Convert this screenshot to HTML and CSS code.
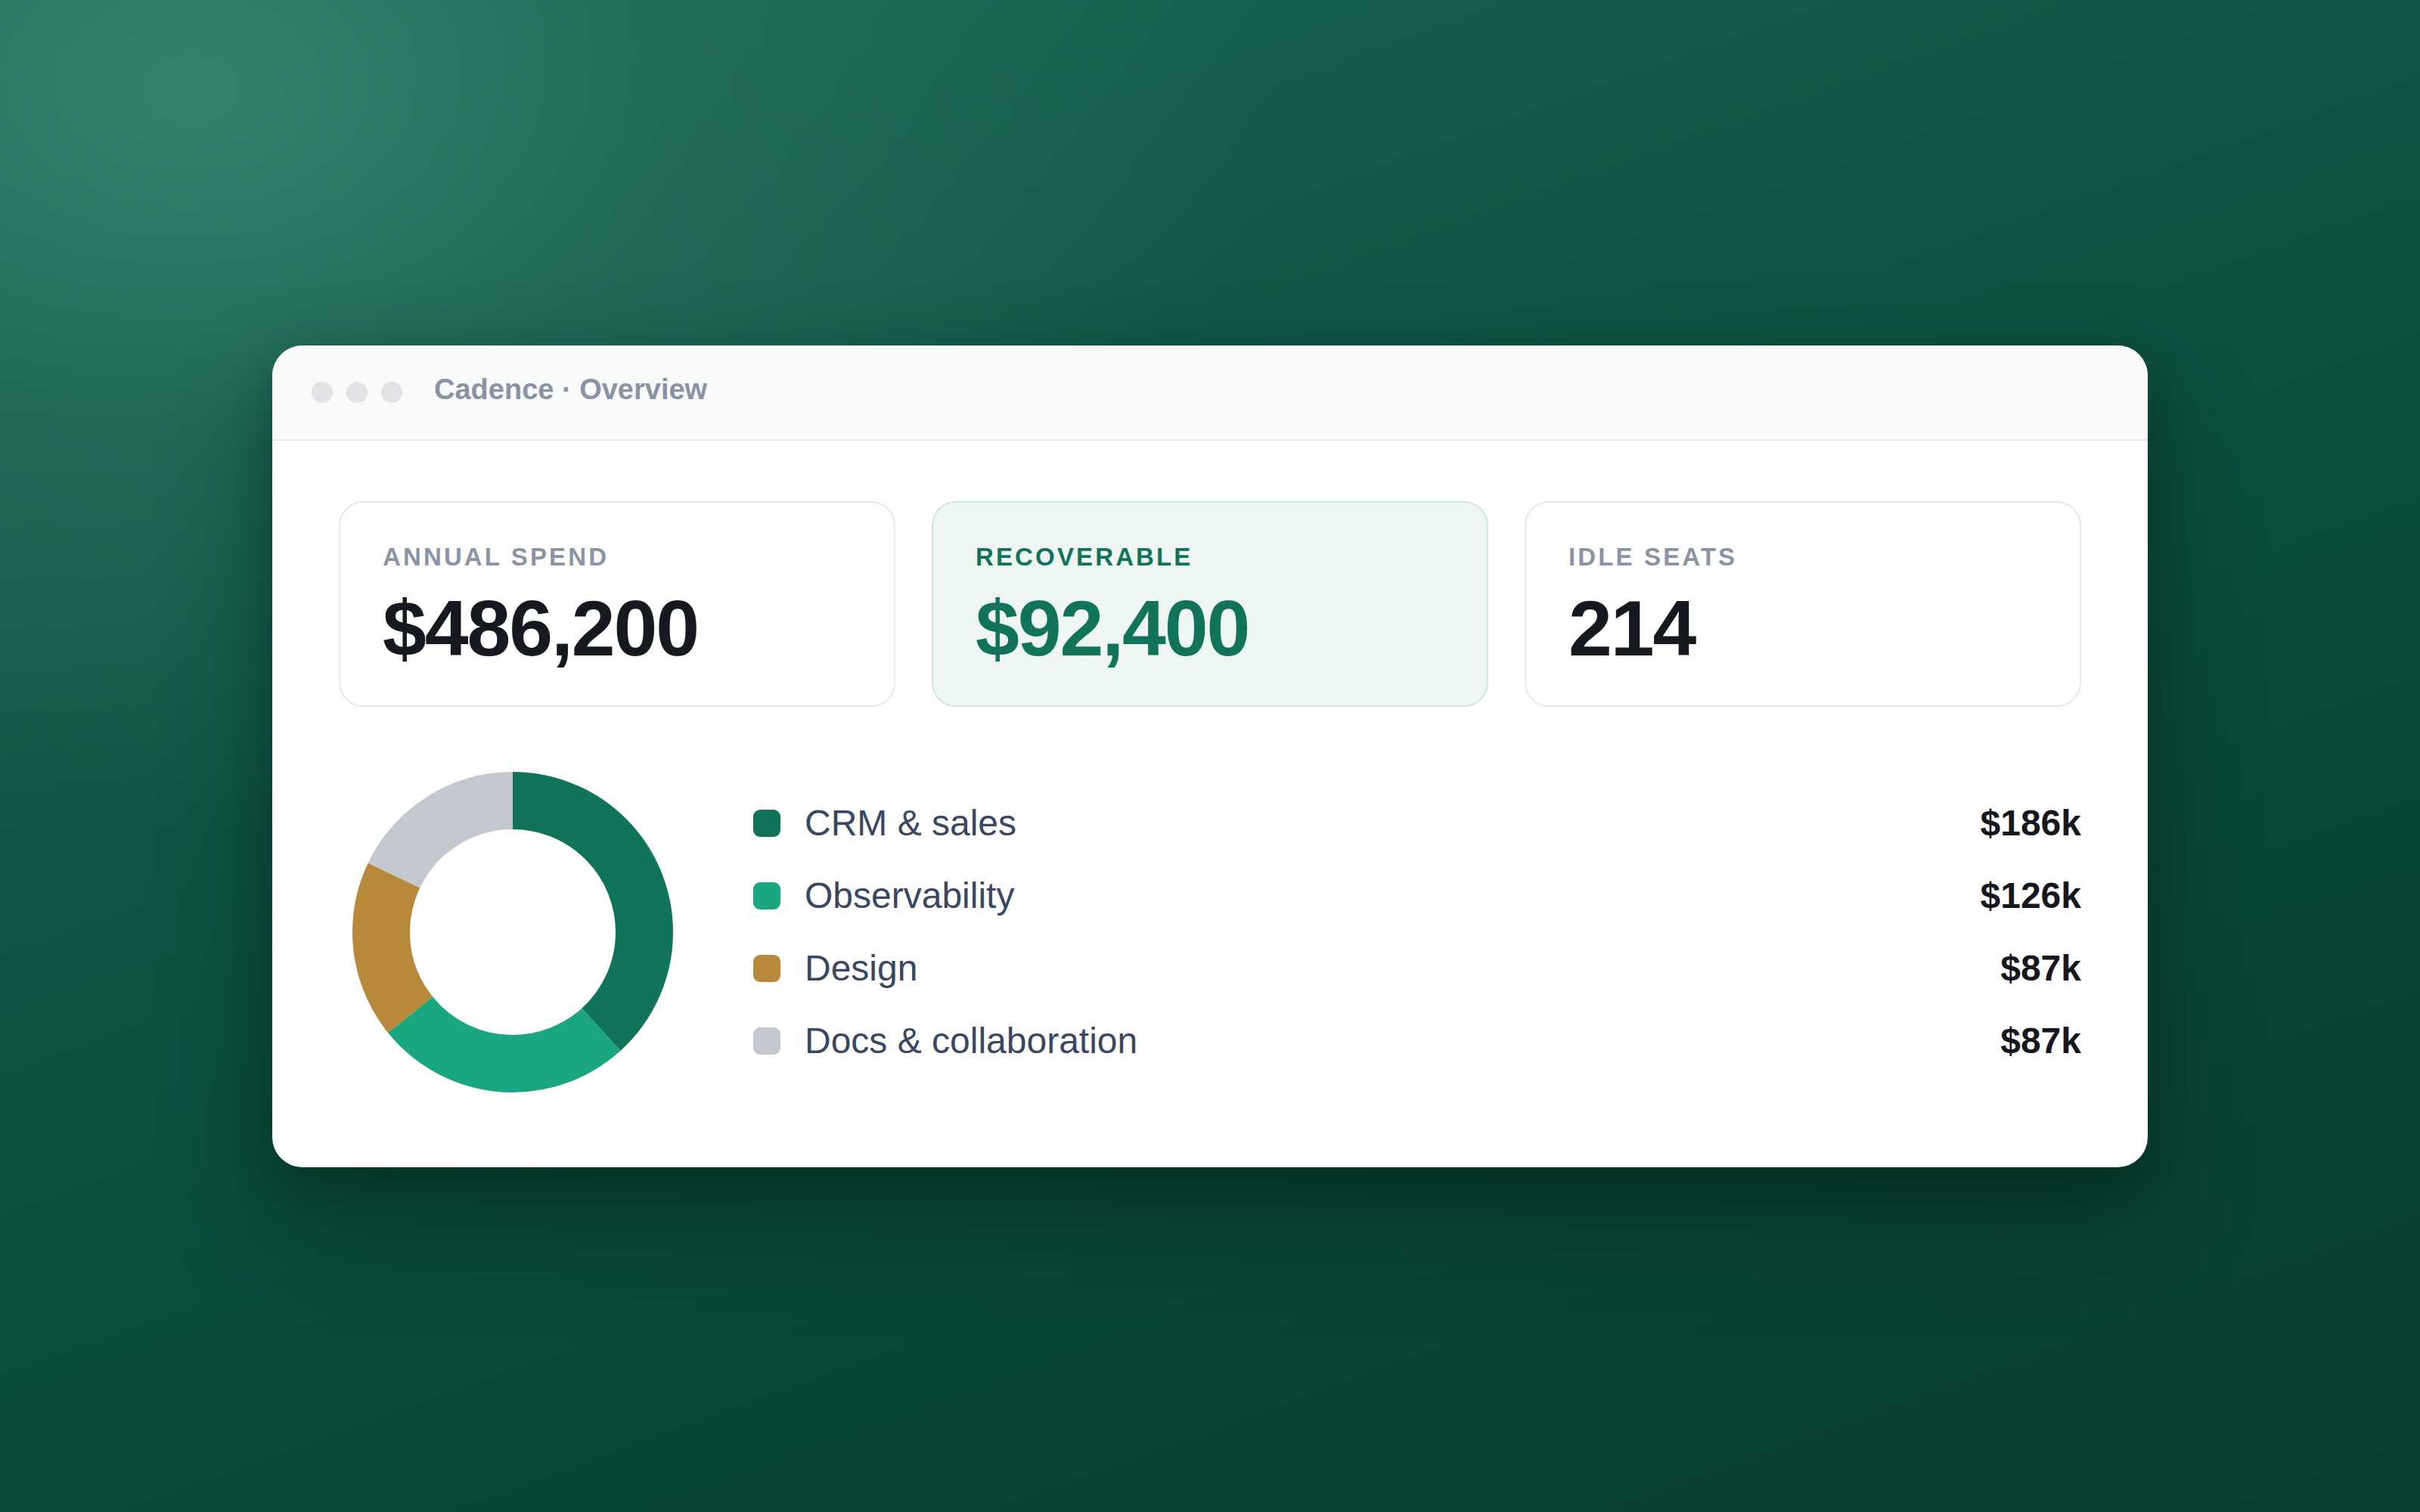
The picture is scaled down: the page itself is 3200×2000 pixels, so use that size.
FILE: index.html
```html
<!DOCTYPE html>
<html lang="en">
<head>
<meta charset="utf-8">
<title>Cadence · Overview</title>
<link rel="stylesheet" href="styles.css">
</head>
<body>
<div class="stage">
  <div class="window">
    <div class="titlebar">
      <div class="dots"><span class="dot"></span><span class="dot"></span><span class="dot"></span></div>
      <div class="title">Cadence · Overview</div>
    </div>
    <div class="body">
      <div class="stats">
        <div class="card">
          <div class="label">ANNUAL SPEND</div>
          <div class="value">$486,200</div>
        </div>
        <div class="card card-accent">
          <div class="label">RECOVERABLE</div>
          <div class="value">$92,400</div>
        </div>
        <div class="card">
          <div class="label">IDLE SEATS</div>
          <div class="value">214</div>
        </div>
      </div>
      <div class="breakdown">
        <svg class="donut" width="460" height="460" viewBox="0 0 460 460">
          <g transform="rotate(-90 230 230)">
            <circle class="seg seg-crm" cx="230" cy="230" r="174" pathLength="486" stroke-dasharray="186 300" stroke-dashoffset="0"></circle>
            <circle class="seg seg-obs" cx="230" cy="230" r="174" pathLength="486" stroke-dasharray="126 360" stroke-dashoffset="-186"></circle>
            <circle class="seg seg-design" cx="230" cy="230" r="174" pathLength="486" stroke-dasharray="87 399" stroke-dashoffset="-312"></circle>
            <circle class="seg seg-docs" cx="230" cy="230" r="174" pathLength="486" stroke-dasharray="87 399" stroke-dashoffset="-399"></circle>
          </g>
        </svg>
        <div class="legend">
          <div class="row"><span class="swatch sw-crm"></span><span class="name">CRM &amp; sales</span><span class="amount">$186k</span></div>
          <div class="row"><span class="swatch sw-obs"></span><span class="name">Observability</span><span class="amount">$126k</span></div>
          <div class="row"><span class="swatch sw-design"></span><span class="name">Design</span><span class="amount">$87k</span></div>
          <div class="row"><span class="swatch sw-docs"></span><span class="name">Docs &amp; collaboration</span><span class="amount">$87k</span></div>
        </div>
      </div>
    </div>
  </div>
</div>
</body>
</html>
```

FILE: styles.css
```css
* { box-sizing: border-box; }

html, body {
  margin: 0;
  padding: 0;
}

body {
  width: 3200px;
  height: 2000px;
  font-family: "Liberation Sans", Arial, sans-serif;
  background:
    radial-gradient(ellipse 1900px 1300px at 8% 6%, rgba(58, 135, 116, 0.85) 0%, rgba(40, 112, 94, 0.55) 35%, rgba(20, 85, 68, 0) 75%),
    linear-gradient(160deg, #1c6a57 0%, #0e5343 40%, #0a4536 75%, #093d30 100%);
  overflow: hidden;
}

.stage {
  width: 3200px;
  height: 2000px;
  display: flex;
  align-items: center;
  justify-content: center;
}

.window {
  width: 2480px;
  background: #ffffff;
  border-radius: 40px;
  overflow: hidden;
  box-shadow: 0 70px 140px rgba(2, 30, 22, 0.45), 0 20px 50px rgba(2, 30, 22, 0.25);
}

.titlebar {
  height: 126px;
  background: #f9fafa;
  border-bottom: 2px solid #e6e7eb;
  display: flex;
  align-items: center;
  padding-left: 52px;
}

.dots {
  display: flex;
  gap: 18px;
}

.dot {
  width: 28px;
  height: 28px;
  border-radius: 50%;
  background: #e1e3e7;
}

.title {
  margin-left: 42px;
  margin-bottom: 6px;
  font-size: 38px;
  font-weight: 700;
  color: #8a93a3;
}

.body {
  padding: 80px 88px 81px;
}

.stats {
  display: grid;
  grid-template-columns: repeat(3, 1fr);
  gap: 48px;
}

.card {
  border: 2px solid #e6e8ec;
  border-radius: 32px;
  padding: 52px 56px 50px;
  background: #ffffff;
}

.card-accent {
  background: #edf6f2;
  border-color: #cfe8df;
}

.label {
  font-size: 33px;
  line-height: 40px;
  font-weight: 700;
  letter-spacing: 0.095em;
  color: #8b94a5;
}

.value {
  margin-top: 22px;
  font-size: 104px;
  line-height: 1;
  font-weight: 700;
  letter-spacing: -0.02em;
  color: #16191f;
}

.card-accent .label,
.card-accent .value {
  color: #11735a;
}

.breakdown {
  margin-top: 68px;
  display: flex;
  align-items: center;
  gap: 88px;
}

.donut {
  display: block;
  flex: none;
}

.seg {
  fill: none;
  stroke-width: 76;
}

.seg-crm { stroke: #11735a; }
.seg-obs { stroke: #1aa680; }
.seg-design { stroke: #b7893b; }
.seg-docs { stroke: #c3c7cf; }

.legend {
  flex: 1;
  display: flex;
  flex-direction: column;
}

.row {
  height: 96px;
  display: flex;
  align-items: center;
}

.swatch {
  width: 36px;
  height: 36px;
  border-radius: 9px;
  flex: none;
}

.sw-crm { background: #11735a; }
.sw-obs { background: #1aa680; }
.sw-design { background: #b7893b; }
.sw-docs { background: #c3c7cf; }

.name {
  margin-left: 32px;
  flex: 1;
  font-size: 48px;
  color: #3a4763;
}

.amount {
  font-size: 48px;
  font-weight: 700;
  color: #15181e;
}
```
